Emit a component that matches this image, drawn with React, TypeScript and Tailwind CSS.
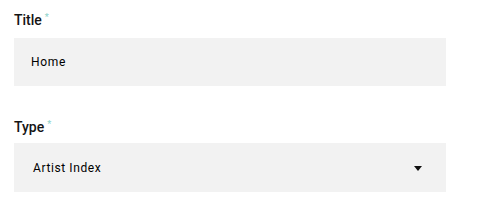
import React from 'react';

const font = { fontFamily: 'Roboto, "Noto Sans", sans-serif' };

function Label({ text }: { text: string }) {
  return (
    <div className="flex h-5 items-start text-[14px] font-medium leading-5 text-[#141414]">
      {text}
      <span className="ml-[3px] text-[9px] leading-[14px] text-[#8fd3cc]">*</span>
    </div>
  );
}

export default function App() {
  return (
    <div className="h-[224px] w-[480px] bg-white pl-[14px] pt-[10px]" style={font}>
      <Label text="Title" />
      <div className="mt-[8px] flex h-[48px] w-[432px] items-center bg-[#f2f2f2] pl-[17px] text-[12px] font-normal tracking-[0.7px] text-black">
        Home
      </div>

      <div className="mt-[31px]">
        <Label text="Type" />
      </div>
      <div className="mt-[6px] flex h-[49px] w-[432px] items-center justify-between bg-[#f2f2f2] pl-[19px] pr-[24px] text-[12px] font-normal tracking-[0.6px] text-black">
        <span className="mt-[1px]">Artist Index</span>
        <svg className="block mt-[2px]" width="8" height="5" viewBox="0 0 8 5">
          <path d="M0 0h8L4 5z" fill="#111" />
        </svg>
      </div>
    </div>
  );
}
